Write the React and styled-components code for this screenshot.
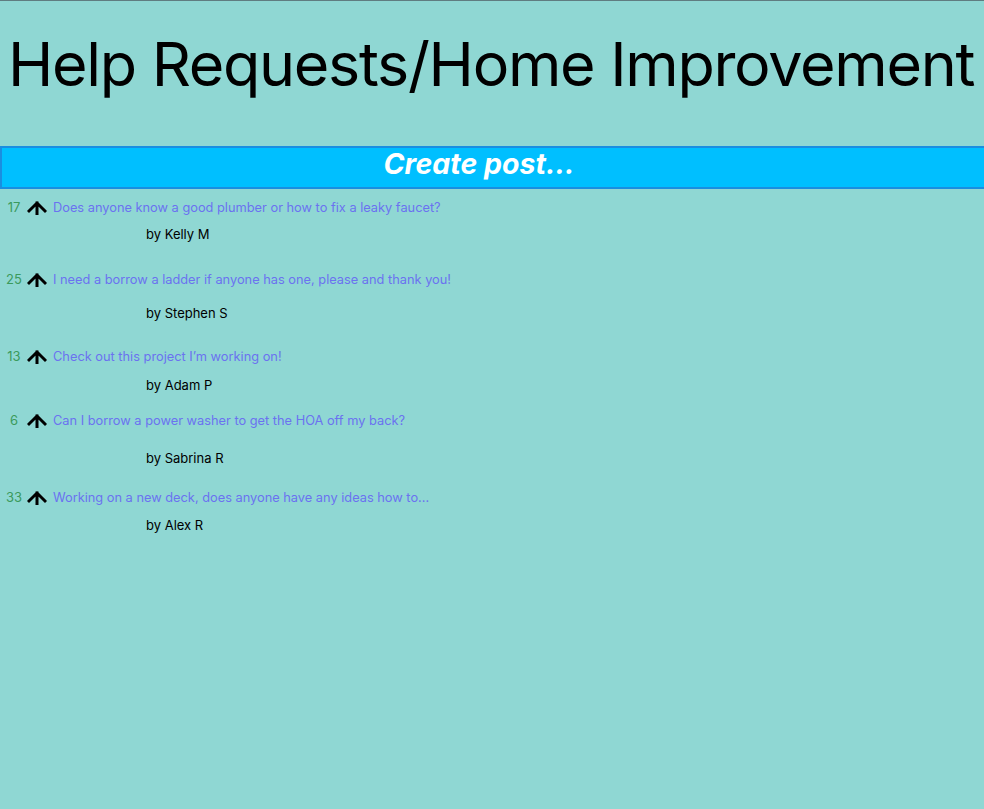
import React from "react";
import styled, { createGlobalStyle } from "styled-components";

const GlobalStyle = createGlobalStyle`
  body {
    margin: 0;
    background: #8fd7d3;
    font-family: Inter, "Noto Sans", sans-serif;
  }
`;

const posts = [
  { score: 17, title: "Does anyone know a good plumber or how to fix a leaky faucet?", author: "Kelly M", top: 8, gap: 9 },
  { score: 25, title: "I need a borrow a ladder if anyone has one, please and thank you!", author: "Stephen S", top: 27, gap: 16 },
  { score: 13, title: "Check out this project I’m working on!", author: "Adam P", top: 25, gap: 11 },
  { score: 6, title: "Can I borrow a power washer to get the HOA off my back?", author: "Sabrina R", top: 17, gap: 20 },
  { score: 33, title: "Working on a new deck, does anyone have any ideas how to...", author: "Alex R", top: 21, gap: 10 },
];

function UpArrow() {
  return (
    <ArrowIcon viewBox="0 0 20 16" aria-hidden="true">
      <path d="M2 12 L10 4 L18 12 M10 4 L10 16" fill="none" stroke="#000" strokeWidth="3" strokeLinecap="square" />
    </ArrowIcon>
  );
}

function App() {
  return (
    <>
      <GlobalStyle />
      <Page>
        <Title>Help Requests/Home Improvement</Title>
        <CreateButton>Create post...</CreateButton>
        <PostList>
          {posts.map((p) => (
            <Post key={p.title} $top={p.top}>
              <PostRow>
                <Score>{p.score}</Score>
                <UpArrow />
                <PostTitle>{p.title}</PostTitle>
              </PostRow>
              <Author $gap={p.gap}>by {p.author}</Author>
            </Post>
          ))}
        </PostList>
      </Page>
    </>
  );
}
export default App;

const Page = styled.div`
  min-height: 808px;
  border-top: 1px solid #5f7c80;
`;

const Title = styled.h1`
  margin: 25px 0 43px 8px;
  font-size: 61px;
  font-weight: 400;
  letter-spacing: -1.3px;
  line-height: 77px;
  color: #000;
  white-space: nowrap;
`;

const CreateButton = styled.div`
  box-sizing: border-box;
  width: 100%;
  height: 43px;
  padding: 0 28px 8px 0;
  background: #00bfff;
  border: 2px solid #1a8ee0;
  border-right: none;
  display: flex;
  align-items: center;
  justify-content: center;
  color: #fff;
  font-size: 28.5px;
  font-weight: 700;
  font-style: italic;
`;

const PostList = styled.div`
  display: flex;
  flex-direction: column;
`;

const Post = styled.div`
  margin-top: ${(p) => p.$top}px;
`;

const PostRow = styled.div`
  display: flex;
  align-items: center;
  height: 20px;
  padding-left: 4px;
`;

const Score = styled.span`
  width: 20px;
  text-align: center;
  font-size: 13px;
  color: #3b9a5c;
`;

const ArrowIcon = styled.svg`
  width: 20px;
  height: 16px;
  margin-left: 3px;
`;

const PostTitle = styled.span`
  margin-left: 6px;
  font-size: 12.8px;
  color: #6b72f0;
`;

const Author = styled.div`
  margin-top: ${(p) => p.$gap}px;
  margin-left: 146px;
  font-size: 13px;
  line-height: 16px;
  color: #000;
`;
